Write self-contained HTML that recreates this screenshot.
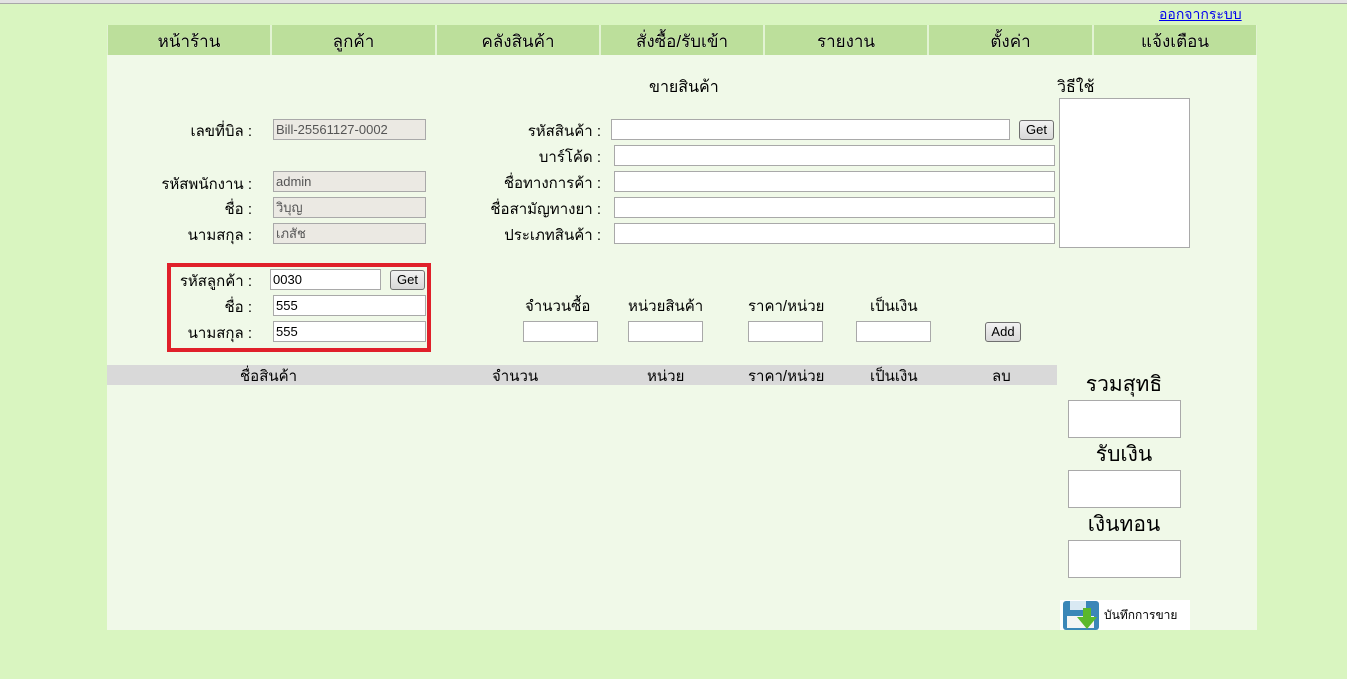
<!DOCTYPE html>
<html><head><meta charset="utf-8"><style>
*{margin:0;padding:0;box-sizing:border-box}
body{width:1347px;height:679px;background:#d9f5c0;font-family:"Liberation Sans","Noto Sans CJK SC",sans-serif;font-size:15px;color:#000;position:relative;overflow:hidden}
.a{position:absolute}
.top{left:0;top:0;width:1347px;height:4px;background:#e2e2e2;border-bottom:1px solid #a8a8a8}
.panel{left:107px;top:55px;width:1150px;height:575px;background:#f0f9e8}
.nav{left:107px;top:25px;width:1150px;height:30px;background:#e2f3d3}
.nc{position:absolute;top:0;height:30px;background:#bcdf9b;text-align:center;line-height:33px;font-size:17px;text-shadow:0 0 1px #fff}
.lbl{position:absolute;text-align:right;white-space:nowrap;margin-top:-2px}
.in{position:absolute;height:21px;background:#fff;border:1px solid #a9a9a9;font-size:13px;line-height:19px;padding-left:2px}
.ro{background:#ebe9e3;color:#555}
.btn{position:absolute;height:20px;border:1px solid #707070;border-radius:3px;background:linear-gradient(#f2f2f2,#d8d8d8);font-size:13px;text-align:center;line-height:18px}
.ta{position:absolute;background:#fff;border:1px solid #a9a9a9}
.big{position:absolute;font-size:21px;width:160px;text-align:center}
.t{position:absolute;margin-top:-2px}
</style></head><body>
<div class="a top"></div>
<a class="a" style="left:1159px;top:4px;color:#0000ee;text-decoration:underline;font-size:14px">ออกจากระบบ</a>
<div class="a panel"></div>
<div class="a nav"></div>
<div class="nc" style="left:108px;width:162px;top:25px">หน้าร้าน</div>
<div class="nc" style="left:272px;width:163px;top:25px">ลูกค้า</div>
<div class="nc" style="left:437px;width:162px;top:25px">คลังสินค้า</div>
<div class="nc" style="left:601px;width:162px;top:25px">สั่งซื้อ/รับเข้า</div>
<div class="nc" style="left:765px;width:162px;top:25px">รายงาน</div>
<div class="nc" style="left:929px;width:163px;top:25px">ตั้งค่า</div>
<div class="nc" style="left:1094px;width:162px;top:25px">แจ้งเตือน</div>

<div class="a" style="left:649px;top:75px;font-size:16px">ขายสินค้า</div>
<div class="a" style="left:1057px;top:75px;font-size:16px">วิธีใช้</div>
<div class="ta" style="left:1059px;top:98px;width:131px;height:150px"></div>

<div class="lbl" style="right:1095px;top:121px">เลขที่บิล :</div>
<div class="in ro" style="left:273px;top:119px;width:153px">Bill-25561127-0002</div>
<div class="lbl" style="right:1095px;top:174px">รหัสพนักงาน :</div>
<div class="in ro" style="left:273px;top:171px;width:153px">admin</div>
<div class="lbl" style="right:1095px;top:199px">ชื่อ :</div>
<div class="in ro" style="left:273px;top:197px;width:153px">วิบุญ</div>
<div class="lbl" style="right:1095px;top:225px">นามสกุล :</div>
<div class="in ro" style="left:273px;top:223px;width:153px">เภสัช</div>

<div class="lbl" style="right:746px;top:121px">รหัสสินค้า :</div>
<div class="in" style="left:611px;top:119px;width:399px"></div>
<div class="btn" style="left:1019px;top:120px;width:35px">Get</div>
<div class="lbl" style="right:746px;top:147px">บาร์โค้ด :</div>
<div class="in" style="left:614px;top:145px;width:441px"></div>
<div class="lbl" style="right:746px;top:173px">ชื่อทางการค้า :</div>
<div class="in" style="left:614px;top:171px;width:441px"></div>
<div class="lbl" style="right:746px;top:199px">ชื่อสามัญทางยา :</div>
<div class="in" style="left:614px;top:197px;width:441px"></div>
<div class="lbl" style="right:746px;top:225px">ประเภทสินค้า :</div>
<div class="in" style="left:614px;top:223px;width:441px"></div>

<div class="a" style="left:167px;top:263px;width:264px;height:89px;border:4px solid #e0202a"></div>
<div class="lbl" style="right:1095px;top:271px">รหัสลูกค้า :</div>
<div class="in" style="left:270px;top:269px;width:111px">0030</div>
<div class="btn" style="left:390px;top:270px;width:35px">Get</div>
<div class="lbl" style="right:1095px;top:297px">ชื่อ :</div>
<div class="in" style="left:273px;top:295px;width:153px">555</div>
<div class="lbl" style="right:1095px;top:323px">นามสกุล :</div>
<div class="in" style="left:273px;top:321px;width:153px">555</div>

<div class="t" style="left:525px;top:296px">จำนวนซื้อ</div>
<div class="t" style="left:628px;top:296px">หน่วยสินค้า</div>
<div class="t" style="left:748px;top:296px">ราคา/หน่วย</div>
<div class="t" style="left:870px;top:296px">เป็นเงิน</div>
<div class="in" style="left:523px;top:321px;width:75px"></div>
<div class="in" style="left:628px;top:321px;width:75px"></div>
<div class="in" style="left:748px;top:321px;width:75px"></div>
<div class="in" style="left:856px;top:321px;width:75px"></div>
<div class="btn" style="left:985px;top:322px;width:36px">Add</div>

<div class="a" style="left:107px;top:365px;width:950px;height:20px;background:#d9d9d9"></div>
<div class="t" style="left:240px;top:366px">ชื่อสินค้า</div>
<div class="t" style="left:492px;top:366px">จำนวน</div>
<div class="t" style="left:647px;top:366px">หน่วย</div>
<div class="t" style="left:748px;top:366px">ราคา/หน่วย</div>
<div class="t" style="left:870px;top:366px">เป็นเงิน</div>
<div class="t" style="left:992px;top:366px">ลบ</div>

<div class="big" style="left:1044px;top:368px">รวมสุทธิ</div>
<div class="ta" style="left:1068px;top:400px;width:113px;height:38px"></div>
<div class="big" style="left:1044px;top:438px">รับเงิน</div>
<div class="ta" style="left:1068px;top:470px;width:113px;height:38px"></div>
<div class="big" style="left:1044px;top:508px">เงินทอน</div>
<div class="ta" style="left:1068px;top:540px;width:113px;height:38px"></div>

<div class="a" style="left:1060px;top:600px;width:130px;height:30px;background:#fff"></div>
<svg class="a" style="left:1062px;top:600px" width="40" height="30" viewBox="0 0 40 30">
<rect x="1" y="1" width="36" height="29" rx="3" fill="#3b86b8"/>
<rect x="8" y="1" width="16" height="9" fill="#d9e9f3"/>
<rect x="5" y="16" width="27" height="12" fill="#f4f4f4"/>
<path d="M21 8h8v9h6l-10 12l-10-12h6z" fill="#5bb82a"/>
</svg>
<div class="a" style="left:1104px;top:606px;font-size:12px">บันทึกการขาย</div>
</body></html>
